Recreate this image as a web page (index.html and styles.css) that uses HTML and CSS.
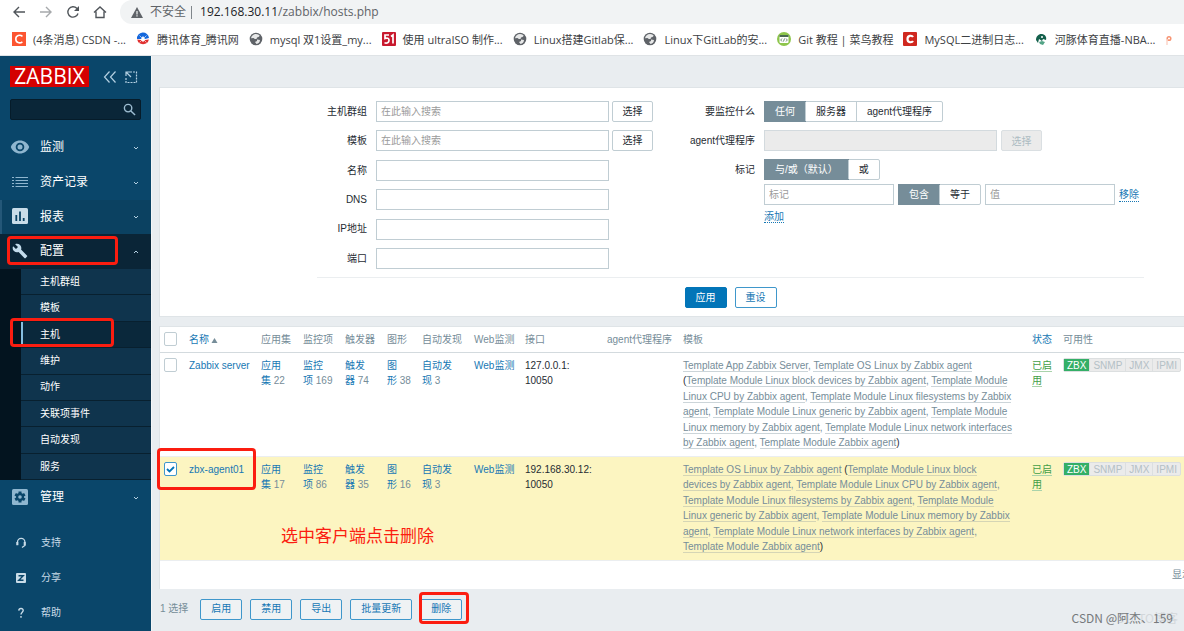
FILE: index.html
```html
<!DOCTYPE html>
<html lang="zh-CN">
<head>
<meta charset="utf-8">
<title>主机</title>
<link rel="stylesheet" href="styles.css">
</head>
<body>
<header class="browser">
  <div class="toolbar">
    <button class="nav-btn" aria-label="后退"><svg viewBox="0 0 14 14"><path d="M13 7H2M7 2L2 7l5 5"/></svg></button>
    <button class="nav-btn faded" aria-label="前进"><svg viewBox="0 0 14 14"><path d="M1 7h11M7 2l5 5-5 5"/></svg></button>
    <button class="nav-btn" aria-label="刷新"><svg viewBox="0 0 14 14"><path d="M12 8.500A5.200 5.200 0 1 1 10.800 3.300L12 4.600"/><path class="solid" d="M13 1v5H8z"/></svg></button>
    <button class="nav-btn" aria-label="主页"><svg viewBox="0 0 14 14"><path d="M1 7.500L7 2l6 5.500M3 6.500V12.500h8V6.500"/></svg></button>
    <div class="address">
      <svg class="warn" viewBox="0 0 12 11"><path fill="#5f6368" d="M6 0l6 11H0z"/><path stroke="#f1f3f4" stroke-width="1.200" d="M6 4v3.500M6 8.300v1.200"/></svg>
      <span class="insecure">不安全</span><span class="bar"></span>
      <span class="url">192.168.30.11<span class="path">/zabbix/hosts.php</span></span>
    </div>
  </div>
  <nav class="bookmarks">
    <a href="#"><svg viewBox="0 0 14 14"><path fill="#fc5531" d="M0 0h14v14H0z"/><path fill="none" stroke="#fff" stroke-width="1.600" d="M10.500 4.300C8 2.300 3.800 3.200 3.800 7s4 4.800 6.600 2.800"/></svg>(4条消息) CSDN -...</a>
    <a href="#"><svg viewBox="0 0 14 14"><circle cx="7" cy="7" r="6" fill="#fff"/><path fill="#1467dc" d="M1 7a6 6 0 0 1 12-1L9 7 7 4 5 7z"/><path fill="#e03131" d="M1.200 7.500L5 8l2 2 2-2 3.900-.500A6 6 0 0 1 1.200 7.500z"/><path stroke="#fff" stroke-width=".6" d="M3.500 3.500l7 7M10.500 3.500l-7 7"/></svg>腾讯体育_腾讯网</a>
    <a href="#"><svg viewBox="0 0 14 14"><circle cx="7" cy="7" r="6.300" fill="#5f6368"/><path fill="#fff" d="M7 2c2 0 3 1 3.800 1.800L9.500 5 8 5.500 7.500 7H5.800L4.500 6 2 6.200C2.400 3.700 4.500 2 7 2zM8 7.500l3 .500c0 2-1.500 3.700-3.500 4L6 10l2-1z" opacity=".85"/></svg>mysql 双1设置_my...</a>
    <a href="#"><svg viewBox="0 0 14 14"><rect width="14" height="14" rx="1" fill="#c8192e"/><path fill="none" stroke="#fff" stroke-width="1.700" d="M7 3H3v3.500c3-1 4 0 4 2S5 11.500 2.500 10.800M9 4.500L11 3v8.500"/></svg>使用 ultraISO 制作...</a>
    <a href="#"><svg viewBox="0 0 14 14"><circle cx="7" cy="7" r="6.300" fill="#5f6368"/><path fill="#fff" d="M7 2c2 0 3 1 3.800 1.800L9.500 5 8 5.500 7.500 7H5.800L4.500 6 2 6.200C2.400 3.700 4.500 2 7 2zM8 7.500l3 .500c0 2-1.500 3.700-3.500 4L6 10l2-1z" opacity=".85"/></svg>Linux搭建Gitlab保...</a>
    <a href="#"><svg viewBox="0 0 14 14"><circle cx="7" cy="7" r="6.300" fill="#5f6368"/><path fill="#fff" d="M7 2c2 0 3 1 3.800 1.800L9.500 5 8 5.500 7.500 7H5.800L4.500 6 2 6.200C2.400 3.700 4.500 2 7 2zM8 7.500l3 .500c0 2-1.500 3.700-3.500 4L6 10l2-1z" opacity=".85"/></svg>Linux下GitLab的安...</a>
    <a href="#"><svg viewBox="0 0 14 14"><circle cx="7" cy="7" r="7" fill="#8dc54b"/><rect x="2.500" y="3" width="9" height="8" rx="1" fill="#fff"/><path fill="#4a6b52" d="M2.500 3h9v2h-9z"/><path fill="none" stroke="#4a6b52" stroke-width=".8" d="M5 6.500L3.700 8 5 9.500M9 6.500L10.300 8 9 9.500M7.500 6.500l-1 3"/></svg>Git 教程 | 菜鸟教程</a>
    <a href="#"><svg viewBox="0 0 14 14"><rect width="14" height="14" rx="1" fill="#d0281f"/><path fill="none" stroke="#fff" stroke-width="2.200" d="M10 5C9 3.200 4.500 3 4.500 7s4.500 3.800 5.500 2"/></svg>MySQL二进制日志...</a>
    <a href="#"><svg viewBox="0 0 14 14"><path fill="#14604c" d="M2 8C2 4 5 1.500 8 2s5 3 4 6l-3-1-1 2-3-2-1 4z"/><circle cx="8" cy="5" r="1" fill="#fff"/><path fill="#53a486" d="M5 10l3-1 3 1-2 3-3-1z"/></svg>河豚体育直播-NBA...</a>
    <a href="#" aria-label="书签"><svg viewBox="0 0 14 14"><circle cx="4" cy="5.500" r="1.800" fill="none" stroke="#f79473" stroke-width="1.500"/><path stroke="#fbd5c8" stroke-width="1.500" d="M2 6v6"/></svg></a>
  </nav>
</header>

<div class="app">
  <aside class="sidebar">
    <div class="brand">
      <span class="logo">ZABBIX</span>
      <button class="side-btn" aria-label="收起"><svg viewBox="0 0 14 14"><path d="M6.500 1.500L1.500 7l5 5.500M12.500 1.500L7.500 7l5 5.500"/></svg></button>
      <button class="side-btn" aria-label="隐藏"><svg viewBox="0 0 14 14"><path stroke-dasharray="2 1" d="M6 2h6.500v10.500H2V7"/><path d="M7 7L2.500 2.500M2 6V2h4"/></svg></button>
    </div>
    <div class="search">
      <input type="text" aria-label="搜索">
      <svg viewBox="0 0 14 14"><circle cx="5.500" cy="5.500" r="4"/><path d="M8.500 8.500L13 13"/></svg>
    </div>
    <nav class="menu">
      <a href="#" class="item"><svg class="ico" viewBox="0 0 20 20"><path fill="#8fb6cf" fill-rule="evenodd" d="M10 3.500c4.200 0 7.700 2.600 9.200 6.500-1.500 3.900-5 6.500-9.200 6.500S2.300 13.900.8 10C2.300 6.100 5.800 3.500 10 3.500zm0 2.200a4.300 4.300 0 1 0 0 8.600 4.300 4.300 0 0 0 0-8.600zm0 1.800a2.500 2.500 0 1 1 0 5 2.500 2.500 0 0 1 0-5z"/></svg><span>监测</span><svg class="chev" viewBox="0 0 6 6"><path d="M1 2l2 2 2-2"/></svg></a>
      <a href="#" class="item"><svg class="ico" viewBox="0 0 20 20"><path stroke="#8fb6cf" stroke-width="1.200" d="M2 5.500h2M5.500 5.500H18M2 8.500h2M5.500 8.500H18M2 11.500h2M5.500 11.500H18M2 14.500h2M5.500 14.500H18"/></svg><span>资产记录</span><svg class="chev" viewBox="0 0 6 6"><path d="M1 2l2 2 2-2"/></svg></a>
      <a href="#" class="item hover"><svg class="ico" viewBox="0 0 20 20"><rect x="2" y="2" width="16" height="16" rx="1.500" fill="#c9dce8"/><path stroke="#0b4364" stroke-width="1.800" d="M6.300 9v6M10 5.500V15M13.700 12v3"/></svg><span>报表</span><svg class="chev" viewBox="0 0 6 6"><path d="M1 2l2 2 2-2"/></svg></a>
      <a href="#" class="item open"><svg class="ico" viewBox="0 0 24 24"><path fill="#c3dcec" d="M22.700 19l-9.100-9.100c.9-2.300.4-5-1.500-6.900-2-2-5-2.400-7.400-1.300L9 6 6 9 1.600 4.700C.4 7.100.9 10.100 2.900 12.100c1.900 1.900 4.600 2.400 6.900 1.500l9.100 9.100c.4.400 1 .4 1.400 0l2.300-2.300c.5-.4.500-1.100.1-1.400z"/></svg><span>配置</span><svg class="chev" viewBox="0 0 6 6"><path d="M1 4l2-2 2 2"/></svg></a>
      <div class="submenu">
        <a href="#">主机群组</a>
        <a href="#">模板</a>
        <a href="#" class="current">主机</a>
        <a href="#">维护</a>
        <a href="#">动作</a>
        <a href="#">关联项事件</a>
        <a href="#">自动发现</a>
        <a href="#">服务</a>
      </div>
      <a href="#" class="item"><svg class="ico" viewBox="0 0 20 20"><rect x="2" y="2" width="16" height="16" rx="1.500" fill="#8fb6cf"/><path stroke="#0a466a" stroke-width="3" d="M10 4.500v11M5.200 7.300l9.600 5.400M14.800 7.300l-9.600 5.400"/><circle cx="10" cy="10" r="4" fill="#0a466a"/><circle cx="10" cy="10" r="1.800" fill="#8fb6cf"/></svg><span>管理</span><svg class="chev" viewBox="0 0 6 6"><path d="M1 2l2 2 2-2"/></svg></a>
    </nav>
    <nav class="support">
      <a href="#"><svg viewBox="0 0 12 12"><path fill="none" stroke="#c9dce8" stroke-width="1.300" d="M2.500 8V5a3.700 3.700 0 0 1 7.400 0v3.500L7 10.500"/><path stroke="#c9dce8" stroke-width="2" d="M2.300 5v3.200M9.700 5v3.200"/></svg>支持</a>
      <a href="#"><svg viewBox="0 0 12 12"><rect x="1" y="1" width="10" height="10" rx="1" fill="#c9dce8"/><path fill="none" stroke="#0a466a" stroke-width="1.400" d="M3.500 3.800h4.700L3.800 8.200h4.700"/></svg>分享</a>
      <a href="#"><svg viewBox="0 0 12 12"><path fill="none" stroke="#c9dce8" stroke-width="1.400" d="M3.800 3.600C4 .6 8.300 1 8.200 3.500 8.100 5.200 6 5.200 6 7.500M6 9v1.700"/></svg>帮助</a>
    </nav>
  </aside>

  <main class="main">
    <form class="filter">
      <div class="fields">
        <div class="col-left">
          <label for="f-group">主机群组</label><input id="f-group" type="text" placeholder="在此输入搜索"><button type="button" class="btn-grey">选择</button>
          <label for="f-tpl">模板</label><input id="f-tpl" type="text" placeholder="在此输入搜索"><button type="button" class="btn-grey">选择</button>
          <label for="f-name">名称</label><input id="f-name" type="text">
          <label for="f-dns">DNS</label><input id="f-dns" type="text">
          <label for="f-ip">IP地址</label><input id="f-ip" type="text">
          <label for="f-port">端口</label><input id="f-port" type="text">
        </div>
        <div class="col-right">
          <span class="caption">要监控什么</span>
          <div class="segmented">
            <label><input type="radio" name="mon" checked><span>任何</span></label><label><input type="radio" name="mon"><span>服务器</span></label><label><input type="radio" name="mon"><span>agent代理程序</span></label>
          </div>
          <label for="f-proxy">agent代理程序</label>
          <div class="inline"><input id="f-proxy" type="text" class="wide" disabled><button type="button" class="btn-grey" disabled>选择</button></div>
          <span class="caption">标记</span>
          <div class="tags">
            <div class="segmented">
              <label><input type="radio" name="ev" checked><span>与/或（默认）</span></label><label><input type="radio" name="ev"><span>或</span></label>
            </div>
            <div class="inline">
              <input type="text" class="tag" placeholder="标记" aria-label="标记">
              <div class="segmented">
                <label><input type="radio" name="op" checked><span>包含</span></label><label><input type="radio" name="op"><span>等于</span></label>
              </div>
              <input type="text" class="tag" placeholder="值" aria-label="值">
              <a href="#" class="dotted">移除</a>
            </div>
            <div class="add"><a href="#" class="dotted">添加</a></div>
          </div>
        </div>
      </div>
      <div class="filter-actions">
        <button type="button" class="btn primary">应用</button><button type="button" class="btn">重设</button>
      </div>
    </form>

    <div class="list">
      <table class="hosts">
        <colgroup><col class="c-check"><col class="c-name"><col class="c-42"><col class="c-42"><col class="c-42"><col class="c-graph"><col class="c-disc"><col class="c-web"><col class="c-if"><col class="c-proxy"><col><col class="c-status"><col class="c-avail"></colgroup>
        <thead>
          <tr><th><input type="checkbox" aria-label="全选"></th><th><a href="#">名称<svg class="sort" viewBox="0 0 6 5"><path d="M3 0l3 5H0z"/></svg></a></th><th>应用集</th><th>监控项</th><th>触发器</th><th>图形</th><th>自动发现</th><th>Web监测</th><th>接口</th><th>agent代理程序</th><th>模板</th><th><a href="#">状态</a></th><th>可用性</th></tr>
        </thead>
        <tbody>
          <tr>
            <td><input type="checkbox" aria-label="Zabbix server"></td><td><a href="#">Zabbix server</a></td>
            <td><a href="#">应用<br>集</a> 22</td><td><a href="#">监控<br>项</a> 169</td><td><a href="#">触发<br>器</a> 74</td><td><a href="#">图<br>形</a> 38</td><td><a href="#">自动发<br>现</a> 3</td><td><a href="#">Web监测</a></td>
            <td class="dark">127.0.0.1:<br>10050</td><td></td>
            <td class="tpl"><a href="#">Template App Zabbix Server</a>, <a href="#">Template OS Linux by Zabbix agent</a><br><b>(</b><a href="#">Template Module Linux block devices by Zabbix agent</a>, <a href="#">Template Module<br>Linux CPU by Zabbix agent</a>, <a href="#">Template Module Linux filesystems by Zabbix<br>agent</a>, <a href="#">Template Module Linux generic by Zabbix agent</a>, <a href="#">Template Module<br>Linux memory by Zabbix agent</a>, <a href="#">Template Module Linux network interfaces<br>by Zabbix agent</a>, <a href="#">Template Module Zabbix agent</a><b>)</b></td>
            <td><a href="#" class="enabled">已启<br>用</a></td>
            <td><div class="avail"><span class="on">ZBX</span><span>SNMP</span><span>JMX</span><span>IPMI</span></div></td>
          </tr>
          <tr class="selected">
            <td><input type="checkbox" checked aria-label="zbx-agent01"></td><td><a href="#">zbx-agent01</a></td>
            <td><a href="#">应用<br>集</a> 17</td><td><a href="#">监控<br>项</a> 86</td><td><a href="#">触发<br>器</a> 35</td><td><a href="#">图<br>形</a> 16</td><td><a href="#">自动发<br>现</a> 3</td><td><a href="#">Web监测</a></td>
            <td class="dark">192.168.30.12:<br>10050</td><td></td>
            <td class="tpl"><a href="#">Template OS Linux by Zabbix agent</a> <b>(</b><a href="#">Template Module Linux block<br>devices by Zabbix agent</a>, <a href="#">Template Module Linux CPU by Zabbix agent</a>,<br><a href="#">Template Module Linux filesystems by Zabbix agent</a>, <a href="#">Template Module<br>Linux generic by Zabbix agent</a>, <a href="#">Template Module Linux memory by Zabbix<br>agent</a>, <a href="#">Template Module Linux network interfaces by Zabbix agent</a>,<br><a href="#">Template Module Zabbix agent</a><b>)</b></td>
            <td><a href="#" class="enabled">已启<br>用</a></td>
            <td><div class="avail"><span class="on">ZBX</span><span>SNMP</span><span>JMX</span><span>IPMI</span></div></td>
          </tr>
        </tbody>
      </table>
      <div class="list-footer">显示</div>
    </div>

    <div class="actions">
      <span>1 选择</span>
      <button class="btn">启用</button><button class="btn">禁用</button><button class="btn">导出</button><button class="btn">批量更新</button><button class="btn">删除</button>
    </div>
  </main>
</div>

<div class="mark mark-config"></div>
<div class="mark mark-hosts"></div>
<div class="mark mark-row"></div>
<div class="mark mark-delete"></div>
<div class="note">选中客户端点击删除</div>
<div class="watermark pale">@51CTO博客</div>
<div class="watermark">CSDN @阿杰、159</div>
</body>
</html>
```
FILE: styles.css
```css
* { box-sizing: border-box; }
body {
  margin: 0;
  min-height: 100vh;
  display: flex;
  flex-direction: column;
  overflow: hidden;
  font: 10px/1.55 "Liberation Sans", "Noto Sans CJK SC", sans-serif;
  color: #1f2c33;
  background: #e9edf0;
}
a { color: #1878b4; text-decoration: none; }
button, input { font: inherit; margin: 0; }
button { padding: 0; }

/* browser */
.browser {
  background: #fff;
  border-bottom: 1px solid #dfe3e6;
  font-family: "Open Sans", "Noto Sans CJK SC", sans-serif;
}
.toolbar { display: flex; align-items: center; height: 24px; padding-left: 12px; gap: 13px; }
.nav-btn { width: 14px; height: 14px; border: 0; background: none; }
.nav-btn svg { display: block; width: 14px; height: 14px; fill: none; stroke: #50555a; stroke-width: 1.400; }
.nav-btn .solid { fill: #50555a; stroke: none; }
.nav-btn.faded { opacity: .5; }
.address {
  flex: 1;
  height: 24px;
  display: flex;
  align-items: center;
  padding-left: 11px;
  border-radius: 12px 0 0 12px;
  background: #f1f3f4;
  font-size: 12px;
  line-height: 24px;
  color: #202124;
}
.warn { width: 12px; height: 11px; margin-right: 7px; }
.insecure, .path { color: #5f6368; }
.bar { width: 1px; height: 13px; margin: 0 8px 0 5px; background: #80868b; }
.bookmarks { display: flex; height: 31px; align-items: center; padding-left: 12px; gap: 10px; white-space: nowrap; overflow: hidden; }
.bookmarks a { display: flex; align-items: center; gap: 7px; color: #3c4043; font-size: 11px; }
.bookmarks svg { width: 14px; height: 14px; flex: none; }

.app { flex: 1; display: flex; }

/* sidebar */
.sidebar { flex: none; width: 151px; background: #0a466a; color: #fff; }
.brand { display: flex; align-items: center; height: 43px; padding: 0 4px 2px 10px; }
.logo {
  flex: none;
  width: 79px;
  height: 21px;
  margin-right: 14px;
  background: #d40000;
  color: #fff;
  font: 21px/21px "Open Sans", sans-serif;
  text-align: center;
}
.side-btn { flex: none; width: 14px; height: 14px; border: 0; background: none; margin-right: 7px; }
.side-btn svg { display: block; width: 14px; height: 14px; fill: none; stroke: #b4d0e2; stroke-width: 1.200; }
.search {
  display: flex;
  align-items: center;
  height: 21px;
  margin: 0 10px 10px;
  padding-right: 4px;
  border: 1px solid #061c2a;
  border-radius: 2px;
  background: #0a2638;
}
.search input { flex: 1; min-width: 0; height: 19px; border: 0; background: none; color: #fff; }
.search svg { width: 13px; height: 13px; fill: none; stroke: #9dbdd2; stroke-width: 1.500; }
.item { display: flex; align-items: center; height: 35px; padding: 0 12px 0 10px; color: #fff; font-size: 12px; }
.item span { flex: 1; }
.ico { width: 20px; height: 20px; margin: -2px 10px 0 0; }
.chev { width: 6px; height: 6px; fill: none; stroke: #b4d0e2; }
.hover { height: 34px; background: #0b4161; box-shadow: inset 2px 0 #245778; }
.open { background: #0a2537; }
.open .ico { padding: 2px; }
.submenu {
  display: grid;
  grid-auto-rows: 1fr;
  min-height: 211px;
  padding-left: 21px;
  background: #03141f;
}
.submenu a {
  display: flex;
  align-items: center;
  padding-left: 19px;
  background: #0f344d;
  border-bottom: 1px solid #08202f;
  color: #fff;
}
.submenu .current { background: #0a283b; box-shadow: inset 2px 0 #86bee0; }
.support { padding-top: 10px; }
.support a { display: flex; align-items: center; gap: 14px; height: 35px; padding-left: 15px; color: #c9dce8; }
.support svg { width: 12px; height: 12px; }

/* filter */
.main { flex: 1; min-width: 0; padding: 31px 0 0 8px; overflow: hidden; border-left: 1px solid #f4f6f7; }
.filter { background: #fff; padding: 13px 40px 8px 157px; border: solid #dfe4e7; border-width: 1px 0 1px 1px; margin-left: -1px; }
.fields { display: flex; gap: 35px; padding-bottom: 8px; border-bottom: 1px solid #ebeef0; }
.fields input[type="text"] { height: 21px; border: 1px solid #c0cdd3; border-radius: 0; padding: 0 4px; background: #fff; color: #1f2c33; }
.fields input::placeholder { color: #9a9a9a; opacity: 1; }
.fields input[type="text"]:disabled { background: #ebebeb; border-color: #d3dade; }
.col-left {
  display: grid;
  grid-template-columns: 59px 233px 44px;
  align-content: space-between;
  align-items: center;
  min-height: 168px;
}
.col-left label { grid-column: 1; padding-right: 9px; text-align: right; }
.col-left button { justify-self: end; }
.col-right {
  display: grid;
  grid-template-columns: 67px auto;
  gap: 8px 9px;
  align-content: start;
  line-height: 21px;
}
.col-right > label, .caption { justify-self: end; white-space: nowrap; }
.inline { display: flex; align-items: center; gap: 4px; }
.wide { width: 233px; }
.btn-grey { width: 41px; height: 21px; border: 1px solid #c0cdd3; border-radius: 2px; background: #fff; color: #1f2c33; }
.btn-grey:disabled { background: #ebebeb; border-color: #dadfe2; color: #acbbc2; }
.tags { display: grid; gap: 4px; }
.tag { width: 130px; }
.segmented { display: flex; width: max-content; height: 21px; border: 1px solid #c0cdd3; border-radius: 2px; line-height: 19px; }
.segmented label { position: relative; display: block; }
.segmented input { position: absolute; inset: 0; opacity: 0; margin: 0; }
.segmented span { display: block; padding: 0 10px; }
.segmented label + label { border-left: 1px solid #c0cdd3; }
.segmented input:checked + span { background: #768d99; color: #fff; box-shadow: 0 0 0 1px #768d99; }
.dotted { border-bottom: 1px dotted #1878b4; line-height: 13px; }
.inline .dotted { display: block; }
.add { line-height: 15px; }
.filter-actions { display: flex; justify-content: center; gap: 8px; padding-top: 9px; }
.btn { height: 21px; padding: 0 10px; border: 1px solid #3f97cb; border-radius: 2px; background: #fff; color: #1878b4; white-space: nowrap; }
.primary { background: #0275b8; border-color: #0275b8; color: #fff; }

/* list */
.list { margin: 9px 0 0 -1px; border: solid #dfe4e7; border-width: 1px 0 0 1px; background: #fff; }
.hosts { width: 100%; table-layout: fixed; border-collapse: collapse; color: #768d99; }
.c-check { width: 25px; }
.c-name { width: 72px; }
.c-42 { width: 42px; }
.c-graph { width: 35px; }
.c-disc { width: 52px; }
.c-web { width: 51px; }
.c-if { width: 82px; }
.c-proxy { width: 76px; }
.c-status { width: 31px; }
.c-avail { width: 125px; }
.hosts th { height: 25px; padding: 0 0 0 4px; text-align: left; font-weight: normal; white-space: nowrap; border-bottom: 1px solid #d3dade; }
.hosts td { height: 104px; padding: 5px 0 4px 4px; vertical-align: top; white-space: nowrap; border-bottom: 1px solid #ebeef0; }
.sort { width: 7px; height: 5px; margin-left: 2px; fill: #768d99; }
.hosts input { appearance: none; display: block; width: 13px; height: 14px; border: 1px solid #c0cdd3; border-radius: 2px; background: #fff; }
.hosts input:checked {
  border-color: #3f97cb;
  background: #fff url("data:image/svg+xml,%3Csvg xmlns='http://www.w3.org/2000/svg' viewBox='0 0 11 12'%3E%3Cpath d='M2 6l2.500 2.500L9 4' fill='none' stroke='%230275b8' stroke-width='1.800'/%3E%3C/svg%3E") center / 11px 12px no-repeat;
}
.selected { background: #fcf5c1; }
.dark, .tpl b { color: #1f2c33; font-weight: normal; }
.tpl a { color: #768d99; border-bottom: 1px solid #ccd5d9; }
.selected .tpl a { border-color: #d5d5b5; }
.hosts .enabled { color: #429e47; border-bottom: 1px solid #a9d3ab; }
.avail { display: flex; width: max-content; height: 14px; border: 1px solid #dcdfe0; border-radius: 2px; background: #ebebeb; color: #b4c0c6; line-height: 13px; }
.avail span { padding: 0 3px; border-right: 1px solid #dcdfe0; }
.avail span:last-child { border-right: 0; }
.avail .on { background: #34af67; color: #fff; }
.list-footer { height: 28px; margin-right: -8px; padding-top: 6px; text-align: right; color: #768d99; }

.actions { display: flex; align-items: center; gap: 8px; padding-top: 10px; color: #768d99; }
.actions span { margin-right: 4px; }
.actions .btn { background: #eff2f4; }

/* annotations */
.mark { position: absolute; border: 3px solid #fb1d10; border-radius: 4px; }
.mark-config { left: 7px; top: 236px; width: 111px; height: 29px; }
.mark-hosts { left: 10px; top: 318px; width: 104px; height: 29px; }
.mark-row { left: 157px; top: 448px; width: 99px; height: 42px; }
.mark-delete { left: 419px; top: 592px; width: 50px; height: 32px; }
.note { position: absolute; left: 281px; top: 525px; font-size: 17px; line-height: 24px; color: #fb1d10; }
.watermark { position: absolute; right: 11px; top: 610px; font: 12px/16px "Noto Sans CJK SC", sans-serif; color: #76797c; }
.pale { right: 6px; color: #d3d7da; }
```
